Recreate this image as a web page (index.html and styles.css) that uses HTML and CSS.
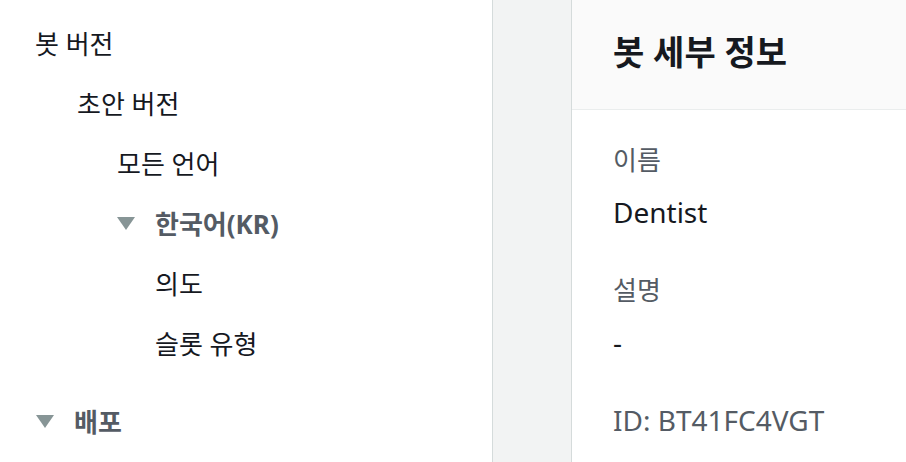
FILE: index.html
```html
<!DOCTYPE html>
<html lang="ko">
<head>
  <meta charset="UTF-8" />
  <meta name="viewport" content="width=device-width, initial-scale=1.0"/>
  <title>봇 세부 정보</title>
  <link rel="stylesheet" href="styles.css">
</head>
<body>
  <nav class="sidebar">
    <ul class="tree">
      <li class="row lvl0">봇 버전</li>
      <li class="row lvl1">초안 버전</li>
      <li class="row lvl2">모든 언어</li>
      <li class="row lvl2 open"><span class="caret"></span>한국어(KR)</li>
      <li class="row lvl3">의도</li>
      <li class="row lvl3">슬롯 유형</li>
      <li class="row lvl0 open section"><span class="caret"></span>배포</li>
    </ul>
  </nav>

  <div class="gutter"></div>

  <main class="card">
    <div class="card-header">
      <h2>봇 세부 정보</h2>
    </div>
    <div class="card-body">
      <div class="field">
        <div class="label">이름</div>
        <div class="value latin">Dentist</div>
      </div>
      <div class="field">
        <div class="label">설명</div>
        <div class="value latin">-</div>
      </div>
      <div class="field">
        <div class="label latin">ID: BT41FC4VGT</div>
      </div>
    </div>
  </main>
</body>
</html>
```

FILE: styles.css
```css
html, body {
  margin: 0;
  height: 100%;
}
body {
  display: flex;
  font-family: "Noto Sans", "Noto Sans CJK KR", sans-serif;
  font-size: 26px;
  color: #16191f;
  background: #fff;
  overflow: hidden;
}
.sidebar {
  width: 492px;
  flex-shrink: 0;
  padding-top: 13px;
  box-sizing: border-box;
}
.tree {
  list-style: none;
  margin: 0;
  padding: 0;
}
.row {
  display: flex;
  align-items: center;
  height: 60px;
  white-space: nowrap;
}
.lvl0 { padding-left: 35px; }
.lvl1 { padding-left: 77px; }
.lvl2 { padding-left: 117px; }
.lvl3 { padding-left: 155px; }
.open {
  font-weight: bold;
  color: #545b64;
}
.lvl0.open { padding-left: 36px; }
.section {
  margin-top: 18px;
}
.caret {
  width: 0;
  height: 0;
  border-left: 9px solid transparent;
  border-right: 9px solid transparent;
  border-top: 13px solid #879596;
  margin-right: 20px;
}
.gutter {
  width: 78px;
  flex-shrink: 0;
  background: #f2f3f3;
  border-left: 1px solid #d5dbdb;
  border-right: 1px solid #d5dbdb;
}
.card {
  flex: 1;
  background: #fff;
}
.card-header {
  height: 110px;
  box-sizing: border-box;
  background: #fafafa;
  border-bottom: 1px solid #eaeded;
  padding: 32px 0 0 41px;
}
.card-header h2 {
  margin: 0;
  font-size: 34px;
  line-height: 40px;
  font-weight: bold;
}
.card-body {
  padding: 24px 0 0 41px;
}
.field + .field {
  margin-top: 26px;
}
.label, .value {
  line-height: 52px;
}
.label {
  color: #545b64;
}
.latin {
  font-size: 28px;
}
```
